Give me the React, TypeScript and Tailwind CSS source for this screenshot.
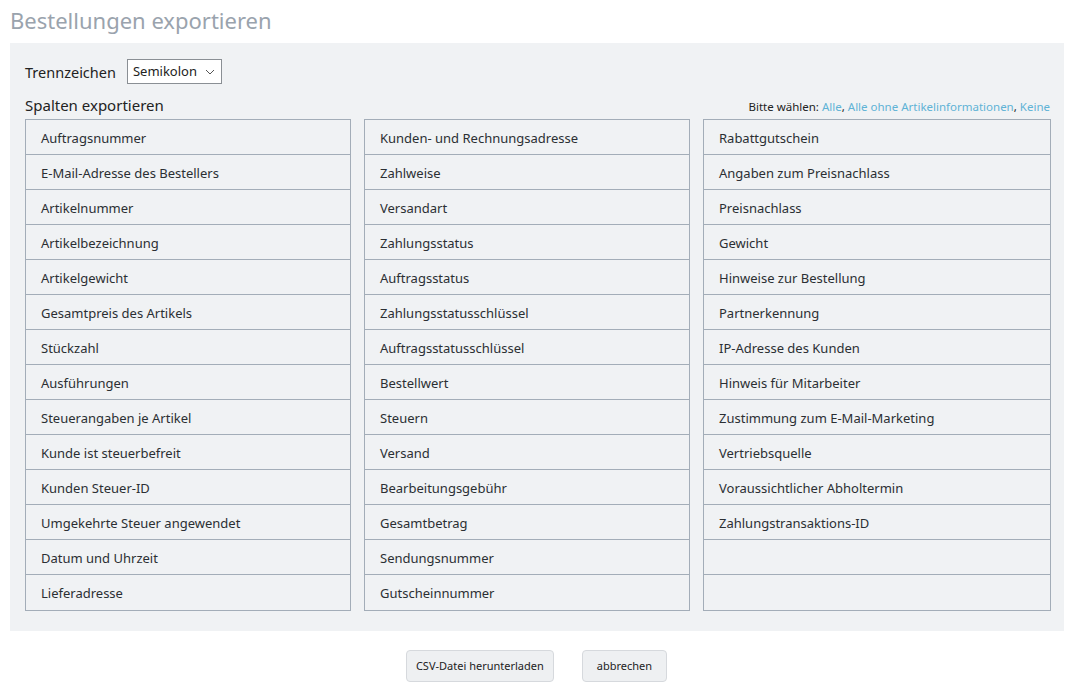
const col1 = [
  "Auftragsnummer",
  "E-Mail-Adresse des Bestellers",
  "Artikelnummer",
  "Artikelbezeichnung",
  "Artikelgewicht",
  "Gesamtpreis des Artikels",
  "Stückzahl",
  "Ausführungen",
  "Steuerangaben je Artikel",
  "Kunde ist steuerbefreit",
  "Kunden Steuer-ID",
  "Umgekehrte Steuer angewendet",
  "Datum und Uhrzeit",
  "Lieferadresse",
];

const col2 = [
  "Kunden- und Rechnungsadresse",
  "Zahlweise",
  "Versandart",
  "Zahlungsstatus",
  "Auftragsstatus",
  "Zahlungsstatusschlüssel",
  "Auftragsstatusschlüssel",
  "Bestellwert",
  "Steuern",
  "Versand",
  "Bearbeitungsgebühr",
  "Gesamtbetrag",
  "Sendungsnummer",
  "Gutscheinnummer",
];

const col3 = [
  "Rabattgutschein",
  "Angaben zum Preisnachlass",
  "Preisnachlass",
  "Gewicht",
  "Hinweise zur Bestellung",
  "Partnerkennung",
  "IP-Adresse des Kunden",
  "Hinweis für Mitarbeiter",
  "Zustimmung zum E-Mail-Marketing",
  "Vertriebsquelle",
  "Voraussichtlicher Abholtermin",
  "Zahlungstransaktions-ID",
  "",
  "",
];

const Column = ({ items }: { items: string[] }) => (
  <div className="border border-[#a3adb8]">
    {items.map((label, i) => (
      <div
        key={i}
        className={
          "h-[35px] flex items-center pl-[15px] pt-[3px] text-[13px] text-[#2b2f33] " +
          (i < items.length - 1 ? "border-b border-[#a3adb8]" : "")
        }
      >
        {label}
      </div>
    ))}
  </div>
);

const App = () => {
  return (
    <div className="w-[1077px] h-[686px] bg-white font-['Noto_Sans',sans-serif] text-[#222]">
      <div className="px-[10px]">
        <h1 className="h-[43px] pt-[5px] text-[22px] leading-[30px] text-[#9aa3ad]">
          Bestellungen exportieren
        </h1>

        <div className="bg-[#f0f2f4] pl-[15px] pr-[13px] pt-[16px] pb-[20px] w-[1054px]">
          <div className="flex items-center gap-[11px]">
            <span className="text-[14.5px] pt-[2px]">Trennzeichen</span>
            <div className="h-[25px] w-[95px] bg-white border border-[#8a8f94] flex items-center justify-between pl-[5px] pr-[6px]">
              <span className="text-[13px]">Semikolon</span>
              <svg width="10" height="6" viewBox="0 0 10 6" fill="none">
                <path d="M1 1l4 4 4-4" stroke="#555" strokeWidth="1" />
              </svg>
            </div>
          </div>

          <div className="flex items-end justify-between mt-[11px] h-[20px]">
            <span className="text-[15px] leading-[20px]">Spalten exportieren</span>
            <span className="text-[11.5px] leading-[16px] pr-[1px]">
              Bitte wählen:{" "}
              <span className="text-[#5fb3d6]">Alle</span>,{" "}
              <span className="text-[#5fb3d6]">Alle ohne Artikelinformationen</span>,{" "}
              <span className="text-[#5fb3d6]">Keine</span>
            </span>
          </div>

          <div className="grid grid-cols-[326px_326px_1fr] gap-[13px] mt-[4px]">
            <Column items={col1} />
            <Column items={col2} />
            <Column items={col3} />
          </div>
        </div>
      </div>

      <div className="flex justify-center gap-[28px] mt-[19px] pr-[4px]">
        <button className="h-[32px] px-[9px] rounded-[4px] border border-[#d6d9dd] bg-[#eef0f2] text-[11px] text-[#222]">
          CSV-Datei herunterladen
        </button>
        <button className="h-[32px] px-[14px] rounded-[4px] border border-[#d6d9dd] bg-[#eef0f2] text-[11px] text-[#222]">
          abbrechen
        </button>
      </div>
    </div>
  );
};

export default App;
